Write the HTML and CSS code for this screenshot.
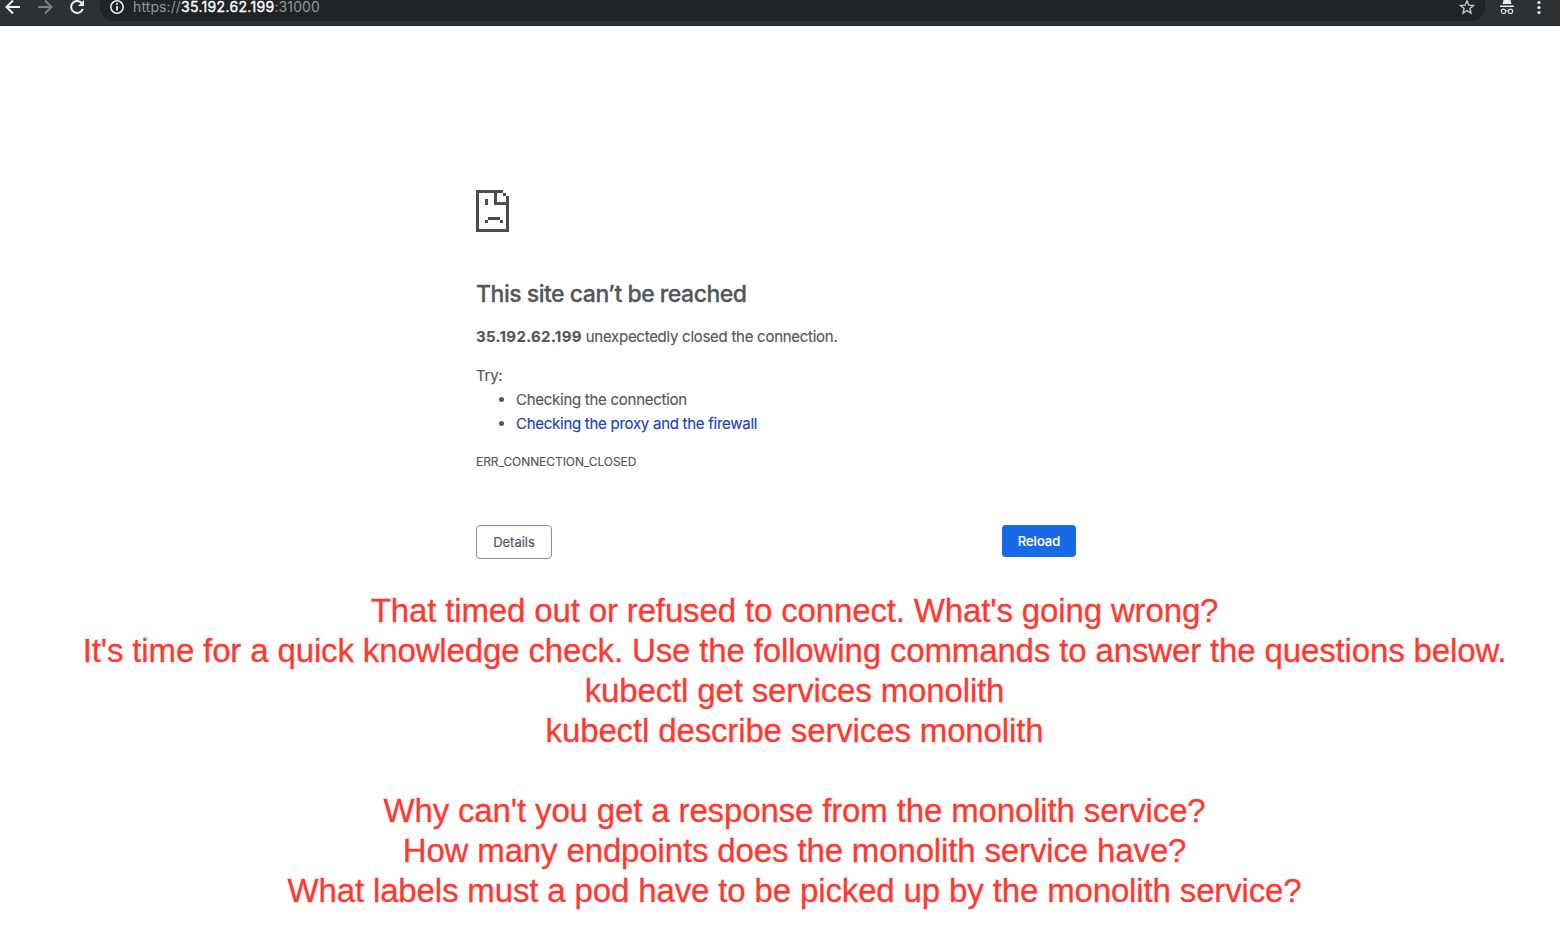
FILE: index.html
```html
<!DOCTYPE html>
<html lang="en">
<head>
<meta charset="utf-8">
<title>35.192.62.199</title>
<link rel="stylesheet" href="styles.css">
</head>
<body>
<header class="toolbar">
  <svg class="nav" width="100" height="24" fill="none" stroke-width="2">
    <path stroke="#f1f3f4" d="M20 7H7M13 .5L6.500 7L13 13.500"/>
    <path stroke="#7d8083" d="M38 7h13M45 .5L51.500 7L45 13.500"/>
    <path stroke="#f1f3f4" d="M81.500 2.800A6 6 0 1 0 82.800 9"/>
    <path fill="#f1f3f4" d="M84 0v6h-6z"/>
  </svg>
  <div class="omnibox">
    <svg class="info" width="16" height="16" fill="none" stroke="#e8eaed"><circle cx="8" cy="8" r="6.200" stroke-width="1.600"/><path stroke-width="1.800" d="M8 7v4.500M8 4v1.800"/></svg>
    <span class="url">https://<span class="host">35.192.62.199</span>:31000</span>
    <svg class="star" width="16" height="16" fill="none" stroke="#c4c7ca" stroke-width="1.400"><path d="M8 1.800L9.800 6.100L14.500 6.500L10.900 9.500L12 14L8 11.600L4 14L5.100 9.500L1.500 6.500L6.200 6.100Z"/></svg>
  </div>
  <svg class="incognito" width="16" height="16"><path fill="#e8eaed" d="M4.500 0h7L12.500 4h-9zM1 5.500h14v1.400H1z"/><g fill="none" stroke="#d5d7da" stroke-width="1.200"><circle cx="4.500" cy="11.300" r="2.200"/><circle cx="11.500" cy="11.300" r="2.200"/><path d="M6.700 11q1.300-1 2.600 0"/></g></svg>
  <svg class="menu" width="6" height="16" fill="#f1f3f4"><circle cx="3" cy="2.500" r="1.600"/><circle cx="3" cy="7.500" r="1.600"/><circle cx="3" cy="12.500" r="1.600"/></svg>
</header>
<main class="error">
  <svg class="sad" width="33" height="42" viewBox="0 0 11 14" fill="#4d4d4d" shape-rendering="crispEdges"><path d="M0 0h9v1H7v3h4v1H6V1H1v12h9V2h1v12H0zM9 1h1v1H9zM3 3h1v2H3zM4 9h4v1H4zM3 10h1v1H3zM8 10h1v1H8zM10 2h1v3h-1z"/></svg>
  <h1 class="title"><span>This site can’t be reached</span></h1>
  <p class="summary"><strong class="bold">35.192.62.199</strong> <span class="reason">unexpectedly closed the connection.</span></p>
  <p class="try">Try:</p>
  <ul class="tips">
    <li><span class="tip">Checking the connection</span></li>
    <li><a class="link">Checking the proxy and the firewall</a></li>
  </ul>
  <p class="code"><span>ERR_CONNECTION_CLOSED</span></p>
  <div class="actions">
    <button class="details">Details</button>
    <button class="reload">Reload</button>
  </div>
</main>
<section class="notes">
  <p>That timed out or refused to connect. What's going wrong?</p>
  <p>It's time for a quick knowledge check. Use the following commands to answer the questions below.</p>
  <p>kubectl get services monolith</p>
  <p>kubectl describe services monolith</p>
  <p></p>
  <p>Why can't you get a response from the monolith service?</p>
  <p>How many endpoints does the monolith service have?</p>
  <p>What labels must a pod have to be picked up by the monolith service?</p>
</section>
</body>
</html>
```
FILE: styles.css
```css
* { box-sizing: border-box; }
body { margin: 0; background: #fff; width: 1560px; height: 931px; overflow: hidden; font-family: Inter, "Liberation Sans", sans-serif; color: #55565a; }
h1, p, ul { margin: 0; padding: 0; }
svg { display: block; flex: none; }
.toolbar { height: 26px; background: #2e3134; border-bottom: 1px solid #222426; display: flex; align-items: flex-start; }
.omnibox { width: 1385px; height: 21px; background: #212427; border-radius: 0 0 14px 14px; display: flex; padding-left: 9px; }
.url { font-size: 14px; line-height: 18px; margin: -2px auto 0 8px; color: #90979d; white-space: nowrap; letter-spacing: .1px; }
.host { color: #f8f9fa; letter-spacing: .32px; -webkit-text-stroke: .4px #f8f9fa; }
.info { margin-top: -1px; }
.star { margin-right: 10px; margin-top: -1px; }
.incognito { margin-left: 14px; }
.menu { margin-left: 21px; }
.error { width: 600px; margin: 164px 0 0 476px; font-size: 15px; line-height: 24px; letter-spacing: -.27px; -webkit-text-stroke: .15px; }
.title { margin-top: 47px; font-size: 23px; font-weight: 500; line-height: 30px; letter-spacing: -.48px; white-space: nowrap; -webkit-text-stroke: .3px; }
.summary { margin-top: 16px; height: 24px; }
.bold { font-weight: 700; letter-spacing: .32px; }
.try { margin-top: 15px; }
.tips { padding-left: 40px; }
.link { color: #1a3fc0; }
.code { margin-top: 16px; font-size: 12px; line-height: 20px; letter-spacing: -.07px; }
.actions { margin-top: 53px; display: flex; justify-content: space-between; }
.actions button { font-family: inherit; font-size: 13px; border-radius: 4px; padding: 0; }
.details { width: 76px; height: 34px; border: 1px solid #8b929a; background: #fff; color: #505357; }
.reload { width: 74px; height: 32px; border: 0; background: #1769e6; color: #fff; font-weight: 500; }
.notes { margin-top: 32px; margin-left: 29px; width: 1531px; text-align: center; font-family: "Liberation Sans", Arial, sans-serif; font-size: 33px; line-height: 40px; letter-spacing: -.14px; color: #ff3830; white-space: nowrap; -webkit-text-stroke: .3px; }
.notes p { height: 40px; }
```
